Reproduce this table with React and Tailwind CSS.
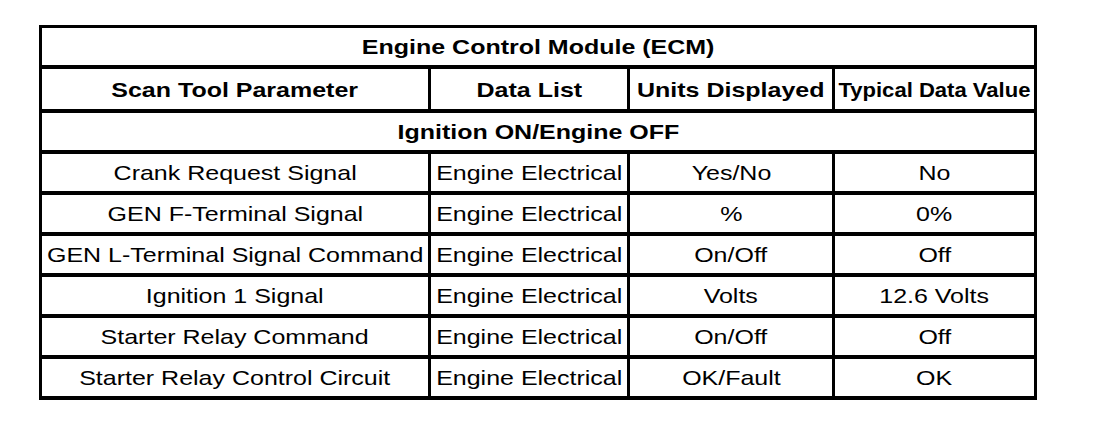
const rows = [
  ["Crank Request Signal", "Engine Electrical", "Yes/No", "No"],
  ["GEN F-Terminal Signal", "Engine Electrical", "%", "0%"],
  ["GEN L-Terminal Signal Command", "Engine Electrical", "On/Off", "Off"],
  ["Ignition 1 Signal", "Engine Electrical", "Volts", "12.6 Volts"],
  ["Starter Relay Command", "Engine Electrical", "On/Off", "Off"],
  ["Starter Relay Control Circuit", "Engine Electrical", "OK/Fault", "OK"],
];

function Cell({ children, bold, span, tall, narrow }) {
  return (
    <div
      className={`bg-white flex items-center justify-center whitespace-nowrap ${tall ? "h-[40px]" : "h-[37px]"} ${span ? "col-span-4" : ""}`}
    >
      <span className={`inline-block ${narrow ? "scale-x-[1.05]" : "scale-x-[1.19]"} ${bold ? "font-bold" : ""}`}>
        {children}
      </span>
    </div>
  );
}

export default function App() {
  return (
    <div className="w-[1120px] h-[440px] bg-white pt-[25px] pl-[39px] text-black text-[21px] leading-none font-['Liberation_Sans',Arial,sans-serif]">
      {/* ECM data table */}
      <div className="w-[998px] grid grid-cols-[386px_196px_202px_199px] gap-x-[3px] gap-y-[4px] bg-black px-[3px] pt-[3px] pb-[4px]">
        <Cell bold span>Engine Control Module (ECM)</Cell>
        <Cell bold tall>Scan Tool Parameter</Cell>
        <Cell bold tall>Data List</Cell>
        <Cell bold tall>Units Displayed</Cell>
        <Cell bold tall narrow>Typical Data Value</Cell>
        <Cell bold span>Ignition ON/Engine OFF</Cell>
        {rows.map((r) =>
          r.map((v, i) => <Cell key={r[0] + i}>{v}</Cell>)
        )}
      </div>
    </div>
  );
}
